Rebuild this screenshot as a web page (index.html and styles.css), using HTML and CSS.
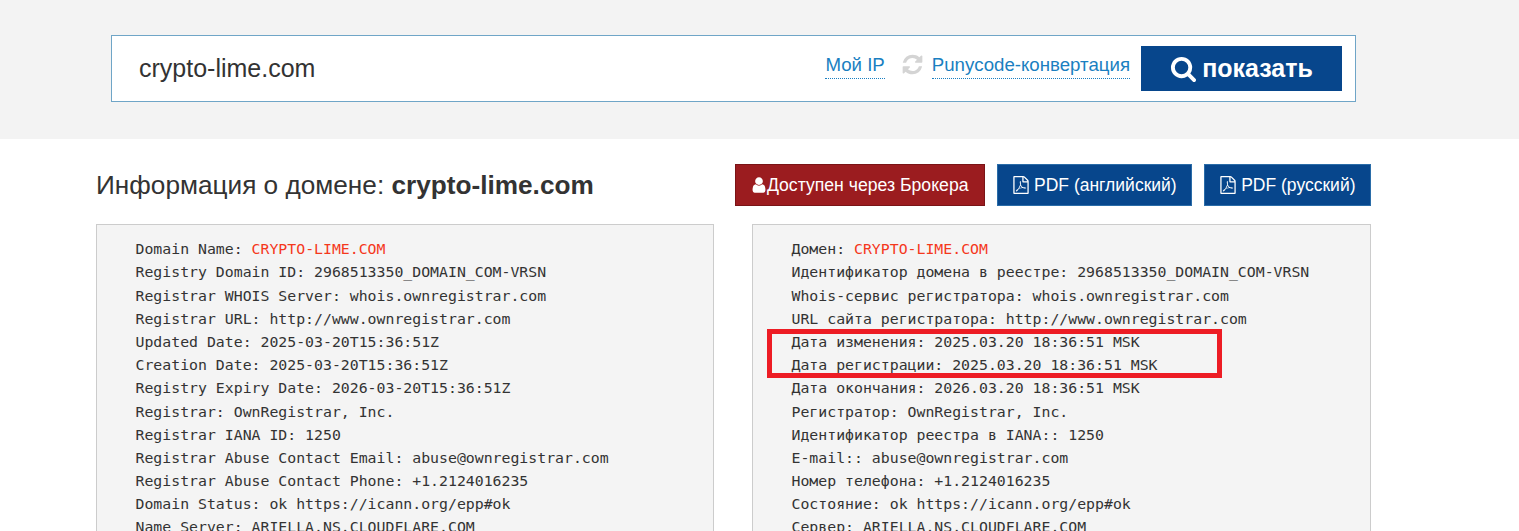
FILE: index.html
```html
<!DOCTYPE html>
<html lang="ru">
<head>
<meta charset="utf-8">
<title>Информация о домене</title>
<link rel="stylesheet" href="styles.css">
</head>
<body>
<div class="page">
  <header class="search-band">
    <form class="search-box">
      <span class="query">crypto-lime.com</span>
      <a class="link link-ip" href="#">Мой IP</a>
      <svg class="refresh" viewBox="0 0 1792 1792"><path d="M1639 1056q0 5-1 7-64 268-268 434.500t-478 166.500q-146 0-282.500-55t-243.500-157l-129 129q-19 19-45 19t-45-19-19-45v-448q0-26 19-45t45-19h448q26 0 45 19t19 45-19 45l-137 137q71 66 161 102t187 36q134 0 250-65t186-179q11-17 53-117 8-23 30-23h192q13 0 22.500 9.500t9.500 22.500zm25-800v448q0 26-19 45t-45 19h-448q-26 0-45-19t-19-45 19-45l138-138q-148-137-349-137-134 0-250 65t-186 179q-11 17-53 117-8 23-30 23h-199q-13 0-22.500-9.500t-9.500-22.500v-7q65-268 270-434.500t480-166.500q146 0 284 55.500t245 156.500l130-129q19-19 45-19t45 19 19 45z"/></svg>
      <a class="link" href="#">Punycode-конвертация</a>
      <button class="show-btn" type="button">
        <svg class="search-icon" viewBox="0 0 1792 1792"><path d="M1216 832q0-185-131.500-316.500t-316.500-131.500-316.500 131.500-131.500 316.500 131.500 316.500 316.500 131.500 316.500-131.500 131.500-316.500zm512 832q0 52-38 90t-90 38q-54 0-90-38l-343-342q-179 124-399 124-143 0-273.500-55.500t-225-150-150-225-55.500-273.500 55.500-273.500 150-225 225-150 273.500-55.500 273.500 55.500 225 150 150 225 55.500 273.500q0 220-124 399l343 343q37 37 37 90z"/></svg>
        показать
      </button>
    </form>
  </header>
  <main class="content">
    <div class="title-row">
      <h1 class="title">Информация о домене: <b>crypto-lime.com</b></h1>
      <div class="actions">
        <a class="btn btn-red" href="#"><svg class="btn-icon" viewBox="0 0 1792 1792"><path d="M1536 1399q0 109-62.500 187t-150.500 78h-854q-88 0-150.500-78t-62.500-187q0-85 8.500-160.500t31.500-152 58.500-131 94-89 134.500-34.500q131 128 313 128t313-128q76 0 134.500 34.500t94 89 58.500 131 31.500 152 8.500 160.500zm-256-887q0 159-112.500 271.500t-271.500 112.500-271.500-112.500-112.500-271.500 112.500-271.500 271.500-112.500 271.500 112.500 112.500 271.500z"/></svg>Доступен через Брокера</a>
        <a class="btn btn-blue" href="#"><svg class="btn-icon" viewBox="0 0 1792 1792"><path d="M1596 380q28 28 48 76t20 88v1152q0 40-28 68t-68 28h-1344q-40 0-68-28t-28-68v-1600q0-40 28-68t68-28h896q40 0 88 20t76 48zm-444-244v376h376q-10-29-22-41l-313-313q-12-12-41-22zm384 1528v-1024h-416q-40 0-68-28t-28-68v-416h-768v1536h1280zm-514-593q33 26 84 56 59-7 117-7 147 0 177 49 16 22 2 52 0 1-1 2l-2 2v1q-6 38-71 38-48 0-115-20t-130-53q-221 24-392 83-153 262-242 262-15 0-28-7l-24-12q-1-1-6-5-10-10-6-36 9-40 56-91.500t132-96.500q14-9 23 6 2 2 2 4 52-85 107-197 68-136 104-262-24-82-30.500-159.500t6.500-127.500q11-40 42-40h22q23 0 35 15 18 21 9 68-2 6-4 8 1 3 1 8v30q-2 123-14 192 55 164 146 238zm-576 411q52-24 137-158-51 40-87.500 84t-49.500 74zm398-920q-15 42-2 132 1-7 7-44 0-3 7-43 1-4 4-8-1-1-1-2-1-2-1-3-1-22-13-36 0 1-1 2v2zm-124 661q135-54 284-81-2-1-13-9.500t-16-13.500q-76-67-127-176-27 86-83 197-30 56-45 83zm646-16q-24-24-140-24 76 28 124 28 14 0 18-1 0-1-2-3z"/></svg>PDF (английский)</a>
        <a class="btn btn-blue" href="#"><svg class="btn-icon" viewBox="0 0 1792 1792"><path d="M1596 380q28 28 48 76t20 88v1152q0 40-28 68t-68 28h-1344q-40 0-68-28t-28-68v-1600q0-40 28-68t68-28h896q40 0 88 20t76 48zm-444-244v376h376q-10-29-22-41l-313-313q-12-12-41-22zm384 1528v-1024h-416q-40 0-68-28t-28-68v-416h-768v1536h1280zm-514-593q33 26 84 56 59-7 117-7 147 0 177 49 16 22 2 52 0 1-1 2l-2 2v1q-6 38-71 38-48 0-115-20t-130-53q-221 24-392 83-153 262-242 262-15 0-28-7l-24-12q-1-1-6-5-10-10-6-36 9-40 56-91.500t132-96.500q14-9 23 6 2 2 2 4 52-85 107-197 68-136 104-262-24-82-30.500-159.500t6.500-127.500q11-40 42-40h22q23 0 35 15 18 21 9 68-2 6-4 8 1 3 1 8v30q-2 123-14 192 55 164 146 238zm-576 411q52-24 137-158-51 40-87.500 84t-49.500 74zm398-920q-15 42-2 132 1-7 7-44 0-3 7-43 1-4 4-8-1-1-1-2-1-2-1-3-1-22-13-36 0 1-1 2v2zm-124 661q135-54 284-81-2-1-13-9.500t-16-13.500q-76-67-127-176-27 86-83 197-30 56-45 83zm646-16q-24-24-140-24 76 28 124 28 14 0 18-1 0-1-2-3z"/></svg>PDF (русский)</a>
      </div>
    </div>
    <div class="panels">
      <pre class="panel">Domain Name: <span class="hl">CRYPTO-LIME.COM</span>
Registry Domain ID: 2968513350_DOMAIN_COM-VRSN
Registrar WHOIS Server: whois.ownregistrar.com
Registrar URL: http://www.ownregistrar.com
Updated Date: 2025-03-20T15:36:51Z
Creation Date: 2025-03-20T15:36:51Z
Registry Expiry Date: 2026-03-20T15:36:51Z
Registrar: OwnRegistrar, Inc.
Registrar IANA ID: 1250
Registrar Abuse Contact Email: abuse@ownregistrar.com
Registrar Abuse Contact Phone: +1.2124016235
Domain Status: ok https://icann.org/epp#ok
Name Server: ARIELLA.NS.CLOUDFLARE.COM
Name Server: JOHN.NS.CLOUDFLARE.COM</pre>
      <pre class="panel">Домен: <span class="hl">CRYPTO-LIME.COM</span>
Идентификатор домена в реестре: 2968513350_DOMAIN_COM-VRSN
Whois-сервис регистратора: whois.ownregistrar.com
URL сайта регистратора: http://www.ownregistrar.com
Дата изменения: 2025.03.20 18:36:51 MSK
Дата регистрации: 2025.03.20 18:36:51 MSK
Дата окончания: 2026.03.20 18:36:51 MSK
Регистратор: OwnRegistrar, Inc.
Идентификатор реестра в IANA:: 1250
E-mail:: abuse@ownregistrar.com
Номер телефона: +1.2124016235
Состояние: ok https://icann.org/epp#ok
Сервер: ARIELLA.NS.CLOUDFLARE.COM
Сервер: JOHN.NS.CLOUDFLARE.COM</pre>
    </div>
    <div class="mark"></div>
  </main>
</div>
</body>
</html>
```
FILE: styles.css
```css
* { box-sizing: border-box; }
html, body { margin: 0; padding: 0; }
body { font-family: "Liberation Sans", Arial, sans-serif; color: #333; background: #fff; }
.page { height: 100vh; overflow: hidden; position: relative; }

.search-band { background: #f3f3f3; height: 139px; padding: 35px 163px 0 111px; }
.search-box {
  height: 67px; background: #fff; border: 1px solid #6fa5c7;
  display: flex; align-items: center; padding: 0 13px 0 27px;
}
.query { font-size: 25px; color: #333; margin-right: auto; }
.link {
  font-size: 18.67px; line-height: 24px; padding-bottom: 1px; color: #1a7fc1; text-decoration: none;
  border-bottom: 1px dotted #1a7fc1; margin-top: -6px;
}
.refresh { width: 23px; height: 23px; fill: #d4d4d4; margin: -8px 8px 0 16px; }
.show-btn {
  width: 201px; height: 45px; margin-left: 11px; border: 0; background: #07468c; color: #fff;
  font: bold 25px "Liberation Sans", Arial, sans-serif;
  display: flex; align-items: center; justify-content: center; gap: 5px;
}
.search-icon { width: 27px; height: 27px; fill: #fff; }

.content { padding: 25px 148px 0 96px; }
.title-row { display: flex; justify-content: space-between; align-items: center; height: 42px; }
.title { margin: 0; font-size: 26.2px; font-weight: 400; color: #333; }
.title b { font-weight: 700; }
.actions { display: flex; gap: 12px; }
.btn {
  height: 42px; display: flex; align-items: center; padding: 0 14.5px 0 14px; color: #fff;
  font-size: 17.5px; font-weight: 400; text-decoration: none; border: 1px solid;
}
.btn-red { background: #9b1c1f; border-color: #7a1416; font-size: 17.65px; padding: 0 15.5px 0 14px; }
.btn-blue { background: #07468c; border-color: #2a6ca8; }
.btn-icon { width: 18px; height: 18px; fill: #fff; margin-right: 4px; flex: none; }
.btn-red .btn-icon { margin-right: -1px; }

.panels { display: grid; grid-template-columns: 618px 619px; column-gap: 38px; margin-top: 18px; }
.panel {
  margin: 0; padding: 12.2px 20px 20px 38.5px; background: #f4f4f4; border: 1px solid #ccc;
  font-family: "DejaVu Sans Mono", monospace; font-size: 14.83px; line-height: 23.19px; color: #333;
}
.hl { color: #f4381c; }

.mark {
  position: absolute; left: 767px; top: 329px; width: 455px; height: 49px;
  border: 5px solid #ed1c24;
}
```
